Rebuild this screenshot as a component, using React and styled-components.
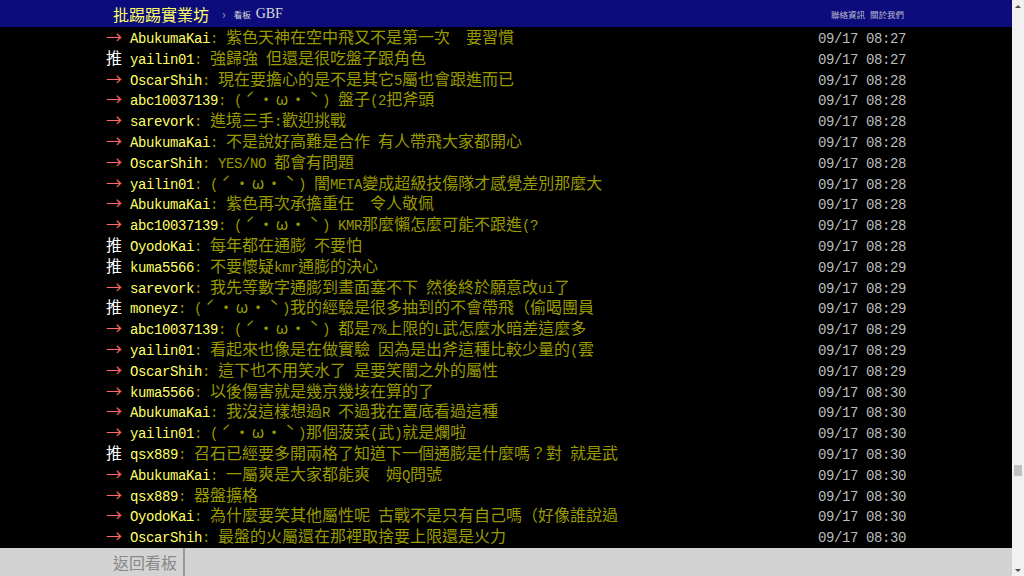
import React from 'react';
import styled, { createGlobalStyle } from 'styled-components';

const GlobalStyle = createGlobalStyle`
  html, body {
    margin: 0;
    padding: 0;
    height: 100%;
    overflow: hidden;
    background: #000;
  }
  #root {
    height: 100%;
  }
`;

// [推文種類, id, 內容, 時間]
const pushes = [
  ['→', 'AbukumaKai', '紫色天神在空中飛又不是第一次　要習慣', '09/17 08:27'],
  ['推', 'yailin01', '強歸強 但還是很吃盤子跟角色', '09/17 08:27'],
  ['→', 'OscarShih', '現在要擔心的是不是其它5屬也會跟進而已', '09/17 08:28'],
  ['→', 'abc10037139', '(ˊ・ω・ˋ) 盤子(2把斧頭', '09/17 08:28'],
  ['→', 'sarevork', '進境三手:歡迎挑戰', '09/17 08:28'],
  ['→', 'AbukumaKai', '不是說好高難是合作 有人帶飛大家都開心', '09/17 08:28'],
  ['→', 'OscarShih', 'YES/NO 都會有問題', '09/17 08:28'],
  ['→', 'yailin01', '(ˊ・ω・ˋ) 闇META變成超級技傷隊才感覺差別那麼大', '09/17 08:28'],
  ['→', 'AbukumaKai', '紫色再次承擔重任　令人敬佩', '09/17 08:28'],
  ['→', 'abc10037139', '(ˊ・ω・ˋ) KMR那麼懶怎麼可能不跟進(?', '09/17 08:28'],
  ['推', 'OyodoKai', '每年都在通膨 不要怕', '09/17 08:28'],
  ['推', 'kuma5566', '不要懷疑kmr通膨的決心', '09/17 08:29'],
  ['→', 'sarevork', '我先等數字通膨到畫面塞不下 然後終於願意改ui了', '09/17 08:29'],
  ['推', 'moneyz', '(ˊ・ω・ˋ)我的經驗是很多抽到的不會帶飛（偷喝團員', '09/17 08:29'],
  ['→', 'abc10037139', '(ˊ・ω・ˋ) 都是7%上限的L武怎麼水暗差這麼多', '09/17 08:29'],
  ['→', 'yailin01', '看起來也像是在做實驗 因為是出斧這種比較少量的(雲', '09/17 08:29'],
  ['→', 'OscarShih', '這下也不用笑水了 是要笑闇之外的屬性', '09/17 08:29'],
  ['→', 'kuma5566', '以後傷害就是幾京幾垓在算的了', '09/17 08:30'],
  ['→', 'AbukumaKai', '我沒這樣想過R 不過我在置底看過這種', '09/17 08:30'],
  ['→', 'yailin01', '(ˊ・ω・ˋ)那個菠菜(武)就是爛啦', '09/17 08:30'],
  ['推', 'qsx889', '召石已經要多開兩格了知道下一個通膨是什麼嗎？對 就是武', '09/17 08:30'],
  ['→', 'AbukumaKai', '一屬爽是大家都能爽　姆Q問號', '09/17 08:30'],
  ['→', 'qsx889', '器盤擴格', '09/17 08:30'],
  ['→', 'OyodoKai', '為什麼要笑其他屬性呢 古戰不是只有自己嗎（好像誰說過', '09/17 08:30'],
  ['→', 'OscarShih', '最盤的火屬還在那裡取捨要上限還是火力', '09/17 08:30'],
];

// 半形字用等寬字型 (每字 8px)，全形字用 CJK 字型 (每字 16px)
// ˊ ˋ ω 在 Noto 是比例寬，另外撐成全形寬
const mixed = (text) =>
  text
    .split(/([\x20-\x7e]+|[ˊˋω])/)
    .filter(Boolean)
    .map((part, i) => {
      if (/^[\x20-\x7e]+$/.test(part)) return <Half key={i}>{part}</Half>;
      if (/^[ˊˋω]$/.test(part)) return <Wide key={i}>{part}</Wide>;
      return <React.Fragment key={i}>{part}</React.Fragment>;
    });

const App = () => {
  return (
    <>
      <GlobalStyle />
      <Screen>
        <Page>
          <TopBar>
            <BarInner>
              <Logo>批踢踢實業坊</Logo>
              <Crumb>›</Crumb>
              <BoardLabel>看板</BoardLabel>
              <BoardName>GBF</BoardName>
              <Links>
                <span>聯絡資訊</span>
                <span>關於我們</span>
              </Links>
            </BarInner>
          </TopBar>

          <Main>
            <Content>
              {pushes.map(([tag, id, text, time], i) => (
                <PushRow key={i}>
                  <Tag $arrow={tag === '→'}>{tag}</Tag>
                  <UserId>{id}</UserId>
                  <PushText>
                    <Half>: </Half>
                    {mixed(text)}
                  </PushText>
                  <PushTime>{time}</PushTime>
                </PushRow>
              ))}
            </Content>
          </Main>

          <Footer>
            <FooterInner>
              <BackLink>返回看板</BackLink>
            </FooterInner>
          </Footer>
        </Page>

        <Scrollbar>
          <ArrowButton>
            <Triangle $up />
          </ArrowButton>
          <Track>
            <Thumb style={{ marginTop: 453 }} />
          </Track>
          <ArrowButton>
            <Triangle />
          </ArrowButton>
        </Scrollbar>
      </Screen>
    </>
  );
};

const Screen = styled.div`
  display: flex;
  height: 100vh;
  font-family: 'Noto Sans CJK TC', 'Noto Sans', sans-serif;
`;

const Page = styled.div`
  flex: 1;
  min-width: 0;
  display: flex;
  flex-direction: column;
`;

const TopBar = styled.div`
  flex: 0 0 27px;
  background-color: #0c0c7c;
`;

const BarInner = styled.div`
  width: 800px;
  height: 100%;
  margin: 0 auto;
  padding: 0 2px 0 7px;
  box-sizing: border-box;
  display: flex;
  align-items: center;
  white-space: nowrap;
`;

const Logo = styled.span`
  color: #ff6;
  font-size: 16px;
  line-height: 1;
`;

const Crumb = styled.span`
  color: #aaa;
  font-size: 12px;
  margin: 0 8px 0 13px;
`;

const BoardLabel = styled.span`
  color: #ddd;
  font-size: 8.5px;
  margin-right: 5px;
`;

const BoardName = styled.span`
  color: #ddd;
  font-family: 'Liberation Serif', serif;
  font-size: 14px;
`;

const Links = styled.div`
  margin-left: auto;
  display: flex;
  gap: 5px;
  color: #bbc;
  font-size: 8.5px;
`;

const Main = styled.div`
  flex: 1;
  overflow: hidden;
`;

const Content = styled.div`
  width: 800px;
  margin: -1px auto 0;
`;

const PushRow = styled.div`
  display: flex;
  align-items: baseline;
  height: 20.8px;
  font-size: 16px;
  line-height: 20.8px;
  white-space: pre;
`;

const Half = styled.span`
  font-family: 'Liberation Mono', monospace;
  font-size: 14px;
  line-height: 1;
  letter-spacing: -0.4px;
`;

const Wide = styled.span`
  display: inline-block;
  width: 16px;
  text-align: center;
  line-height: 1;
`;

const Tag = styled.span`
  display: inline-block;
  width: 24px;
  color: ${({ $arrow }) => ($arrow ? '#f66' : '#fff')};
`;

const UserId = styled(Half)`
  color: #ff6;
`;

const PushText = styled.span`
  color: #990;
`;

const PushTime = styled(Half)`
  margin-left: auto;
  color: #bbb;
`;

const Footer = styled.div`
  flex: 0 0 28px;
  background-color: #d3d3d3;
`;

const FooterInner = styled.div`
  width: 800px;
  height: 100%;
  margin: 0 auto;
  display: flex;
`;

const BackLink = styled.div`
  display: flex;
  align-items: center;
  padding: 0 6px 0 7px;
  border-right: 2px solid #999;
  color: #888;
  font-size: 16px;
`;

const Scrollbar = styled.div`
  flex: 0 0 12px;
  display: flex;
  flex-direction: column;
  background-color: #f1f1f1;
`;

const ArrowButton = styled.div`
  flex: 0 0 12px;
  display: flex;
  align-items: center;
  justify-content: center;
`;

const Triangle = styled.div`
  width: 0;
  height: 0;
  border-left: 3px solid transparent;
  border-right: 3px solid transparent;
  ${({ $up }) =>
    $up ? 'border-bottom: 3px solid #505050;' : 'border-top: 3px solid #505050;'}
`;

const Track = styled.div`
  flex: 1;
  display: flex;
  flex-direction: column;
`;

const Thumb = styled.div`
  height: 11px;
  margin: 0 2px;
  background-color: #c1c1c1;
`;

export default App;
